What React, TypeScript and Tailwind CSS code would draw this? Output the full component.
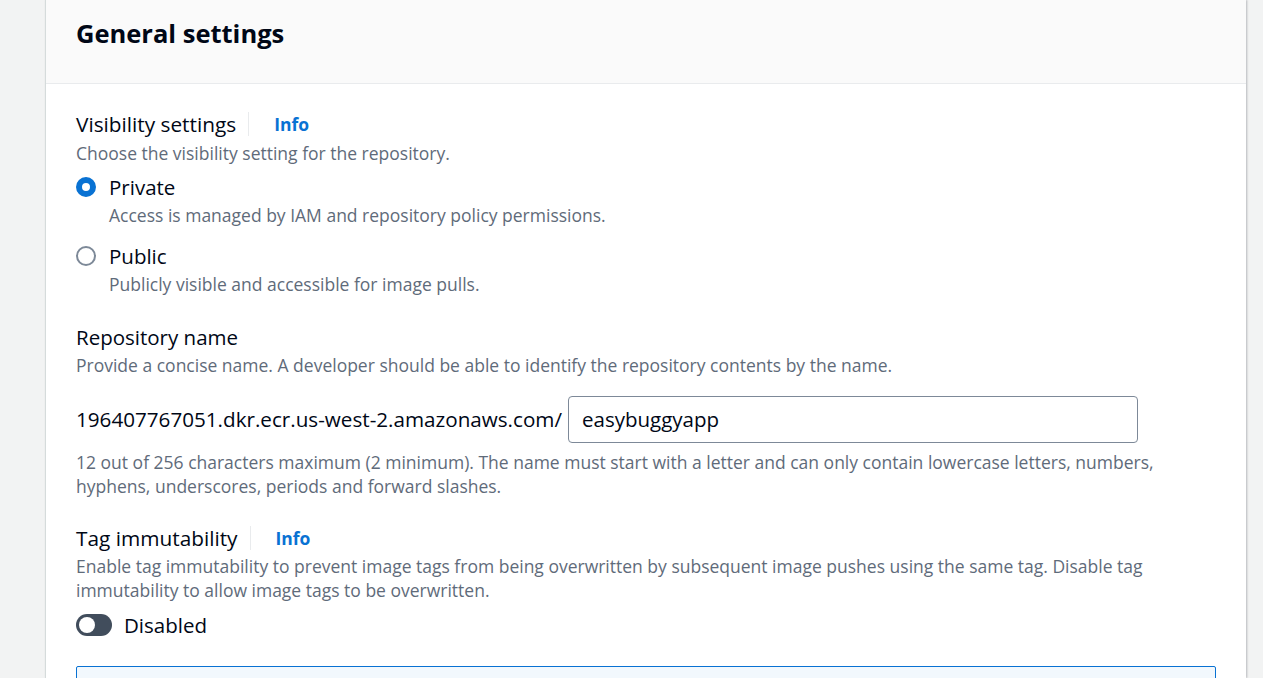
import React from 'react';

const InfoLabel: React.FC<{ label: string }> = ({ label }) => (
  <div className="flex items-center h-[30px]">
    <span className="text-[20.8px] text-[#000716] leading-[30px]">{label}</span>
    <span className="ml-[12px] h-[24px] w-px bg-[#e9ebed]" />
    <a className="text-[17.5px] font-bold text-[#0972d3] ml-[25px]">Info</a>
  </div>
);

const App: React.FC = () => {
  return (
    <div className="h-[678px] overflow-hidden bg-[#f2f3f3] flex" style={{ fontFamily: '"Open Sans", "Noto Sans", Arial, sans-serif' }}>
      <div className="ml-[45px] w-[1201px] bg-white border-l border-[#d5dbdb] shadow-[1px_0_2px_rgba(0,7,22,0.25)]">
        {/* Header */}
        <div className="bg-[#fafafa] border-b border-[#e9ebed] h-[84px] px-[30px] pt-[14px]">
          <h2 className="text-[25.5px] font-bold text-[#000716] leading-[38px]">General settings</h2>
        </div>

        {/* Body */}
        <div className="px-[30px] pt-[25px]">
          {/* Visibility */}
          <InfoLabel label="Visibility settings" />
          <p className="text-[17.5px] text-[#5f6b7a] leading-[24px] mt-[2px]">Choose the visibility setting for the repository.</p>

          <div className="mt-[8px] flex flex-col gap-[15px]">
            <div className="flex">
              <span className="mt-[4px] w-[20px] h-[20px] rounded-full border-[6px] border-[#0972d3] bg-white shrink-0" />
              <div className="ml-[13px]">
                <div className="text-[20.5px] text-[#000716] leading-[28px]">Private</div>
                <div className="text-[17.5px] text-[#5f6b7a] leading-[24px] mt-[2px]">Access is managed by IAM and repository policy permissions.</div>
              </div>
            </div>
            <div className="flex">
              <span className="mt-[4px] w-[20px] h-[20px] rounded-full border-2 border-[#7d8998] bg-white shrink-0" />
              <div className="ml-[13px]">
                <div className="text-[20.5px] text-[#000716] leading-[28px]">Public</div>
                <div className="text-[17.5px] text-[#5f6b7a] leading-[24px] mt-[2px]">Publicly visible and accessible for image pulls.</div>
              </div>
            </div>
          </div>

          {/* Repository name */}
          <div className="mt-[26px]">
            <div className="text-[20.5px] text-[#000716] leading-[30px]">Repository name</div>
            <p className="text-[17.5px] text-[#5f6b7a] leading-[24px] mt-[1px]">Provide a concise name. A developer should be able to identify the repository contents by the name.</p>
            <div className="flex items-center mt-[19px]">
              <span className="text-[20.65px] text-[#000716] mr-[6px]">196407767051.dkr.ecr.us-west-2.amazonaws.com/</span>
              <div className="w-[570px] h-[47px] border border-[#7d8998] rounded-[4px] flex items-center px-[13px]">
                <span className="text-[20.5px] text-[#000716]">easybuggyapp</span>
              </div>
            </div>
            <p className="text-[17.5px] text-[#5f6b7a] leading-[24px] mt-[7px]">
              12 out of 256 characters maximum (2 minimum). The name must start with a letter and can only contain lowercase letters, numbers, hyphens, underscores, periods and forward slashes.
            </p>
          </div>

          {/* Tag immutability */}
          <div className="mt-[25px]">
            <InfoLabel label="Tag immutability" />
            <p className="text-[17.5px] text-[#5f6b7a] leading-[24px] mt-[1px]">
              Enable tag immutability to prevent image tags from being overwritten by subsequent image pushes using the same tag. Disable tag immutability to allow image tags to be overwritten.
            </p>
            <div className="flex items-center h-[28px] mt-[9px]">
              <span className="w-[36px] h-[22px] rounded-full bg-[#414d5c] flex items-center px-[3px]">
                <span className="w-[16px] h-[16px] rounded-full bg-white" />
              </span>
              <span className="ml-[12px] text-[20.5px] text-[#000716]">Disabled</span>
            </div>
          </div>

          <div className="mt-[27px] h-[40px] border border-[#0972d3] rounded-t-[2px] bg-[#f2f8fd]" />
        </div>
      </div>
    </div>
  );
};

export default App;
